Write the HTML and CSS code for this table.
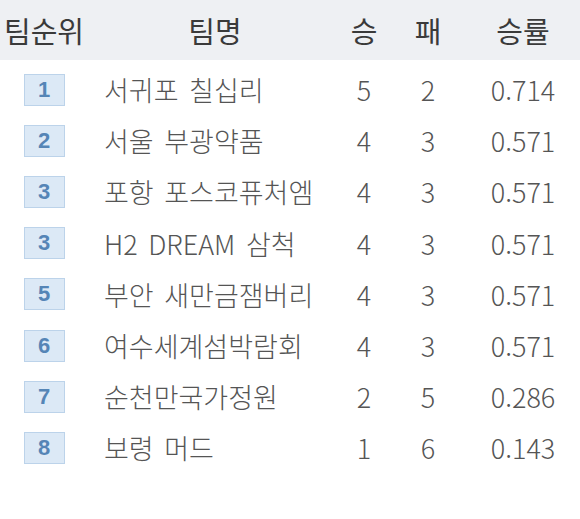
FILE: index.html
```html
<!DOCTYPE html>
<html lang="ko">
<head>
<meta charset="utf-8">
<link rel="stylesheet" href="styles.css">
</head>
<body>
<div class="standings">
  <div class="row head">
    <div class="c rank">팀순위</div>
    <div class="c name">팀명</div>
    <div class="c num">승</div>
    <div class="c num">패</div>
    <div class="c pct">승률</div>
  </div>
  <div class="body">
    <div class="row"><div class="c rank"><span class="badge">1</span></div><div class="c name">서귀포 칠십리</div><div class="c num">5</div><div class="c num">2</div><div class="c pct">0.714</div></div>
    <div class="row"><div class="c rank"><span class="badge">2</span></div><div class="c name">서울 부광약품</div><div class="c num">4</div><div class="c num">3</div><div class="c pct">0.571</div></div>
    <div class="row"><div class="c rank"><span class="badge">3</span></div><div class="c name">포항 포스코퓨처엠</div><div class="c num">4</div><div class="c num">3</div><div class="c pct">0.571</div></div>
    <div class="row"><div class="c rank"><span class="badge">3</span></div><div class="c name">H2 DREAM 삼척</div><div class="c num">4</div><div class="c num">3</div><div class="c pct">0.571</div></div>
    <div class="row"><div class="c rank"><span class="badge">5</span></div><div class="c name">부안 새만금잼버리</div><div class="c num">4</div><div class="c num">3</div><div class="c pct">0.571</div></div>
    <div class="row"><div class="c rank"><span class="badge">6</span></div><div class="c name">여수세계섬박람회</div><div class="c num">4</div><div class="c num">3</div><div class="c pct">0.571</div></div>
    <div class="row"><div class="c rank"><span class="badge">7</span></div><div class="c name">순천만국가정원</div><div class="c num">2</div><div class="c num">5</div><div class="c pct">0.286</div></div>
    <div class="row"><div class="c rank"><span class="badge">8</span></div><div class="c name">보령 머드</div><div class="c num">1</div><div class="c num">6</div><div class="c pct">0.143</div></div>
  </div>
</div>
</body>
</html>
```
FILE: styles.css
```css
html, body {
  margin: 0;
  padding: 0;
  background: #ffffff;
}
.standings {
  width: 580px;
  font-family: "Noto Sans CJK KR", "Noto Sans", sans-serif;
  color: #555555;
}
.row {
  display: grid;
  grid-template-columns: 88px 254px 44px 84px 1fr;
  align-items: center;
  height: 51.2px;
  font-size: 27px;
  font-weight: 300;
}
.row.head {
  height: 60px;
  background: #eef0f3;
  color: #3a3a3a;
  font-size: 29px;
  font-weight: 400;
}
.body {
  padding-top: 4px;
}
.c {
  text-align: center;
  white-space: nowrap;
  line-height: 1;
}
.row .name {
  text-align: left;
  padding-left: 16px;
  word-spacing: 3px;
}
.row.head .name {
  text-align: center;
  padding-left: 0;
  word-spacing: 0;
}
.pct {
  padding-right: 4px;
}
.rank {
  display: flex;
  justify-content: center;
}
.badge {
  display: flex;
  align-items: center;
  justify-content: center;
  width: 39px;
  height: 30px;
  background: #dce9f6;
  border: 1px solid #bcd3ea;
  color: #5585b6;
  font-family: "Liberation Sans", "DejaVu Sans", sans-serif;
  font-weight: bold;
  font-size: 22px;
}
```
